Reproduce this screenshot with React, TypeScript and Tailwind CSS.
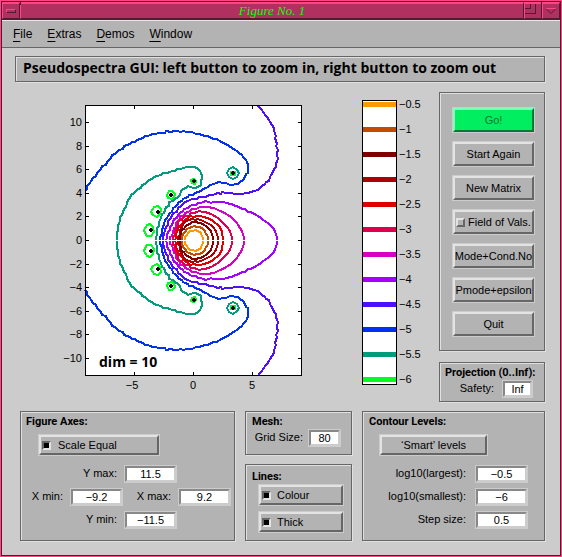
import React, { useId } from "react";

type Point = [number, number];

const AXIS_Y = 240;

const levels = [
  { value: "−0.5", color: "#ff9900" },
  { value: "−1", color: "#c04c00" },
  { value: "−1.5", color: "#800000" },
  { value: "−2", color: "#ad0000" },
  { value: "−2.5", color: "#dc0000" },
  { value: "−3", color: "#de004c" },
  { value: "−3.5", color: "#d800c4" },
  { value: "−4", color: "#a400ff" },
  { value: "−4.5", color: "#4c10ff" },
  { value: "−5", color: "#0030f0" },
  { value: "−5.5", color: "#009c7c" },
  { value: "−6", color: "#00ff20" },
];

// Upper halves of the level curves; the lower halves are their reflections.
const contours: { color: string; points: Point[] }[] = [
  {
    color: "#009c7c",
    points: [
      [117, 240], [117, 236], [119, 223], [123, 212], [130, 198], [138, 189], [147, 182], [157, 176],
      [167, 173], [180, 169], [190, 167], [197, 168], [201, 173], [202, 181], [198, 187], [193, 188],
      [189, 187], [183, 189], [178, 197], [170, 203], [165, 210], [160, 220], [157, 231], [156, 240],
    ],
  },
  {
    color: "#0030f0",
    points: [
      [85, 191], [90, 183], [97, 173], [105, 164], [115, 154], [127, 145], [140, 139], [153, 134],
      [167, 132], [177, 131], [190, 132], [205, 136], [220, 141], [232, 148], [242, 155], [247, 162],
      [248, 170], [245, 177], [240, 182], [233, 185], [223, 183], [216, 183], [208, 187], [198, 192],
      [190, 196], [183, 199], [175, 207], [167, 218], [162, 230], [160, 240],
    ],
  },
  {
    color: "#4c10ff",
    points: [
      [258, 106], [265, 115], [272, 125], [275, 135], [277, 147], [277, 161], [273, 172], [268, 180],
      [260, 188], [248, 193], [237, 194], [223, 193], [215, 194], [203, 197], [190, 200], [183, 204],
      [176, 211], [170, 219], [165, 230], [163, 240],
    ],
  },
  {
    color: "#a400ff",
    points: [
      [277, 240], [276, 233], [270, 225], [258, 216], [243, 209], [230, 204], [220, 202], [210, 202],
      [203, 202], [190, 206], [180, 213], [173, 222], [168, 232], [166, 240],
    ],
  },
  {
    color: "#d800c4",
    points: [
      [244, 240], [243, 233], [238, 225], [231, 217], [220, 211], [207, 207], [198, 208], [190, 211],
      [181, 217], [175, 226], [170, 240],
    ],
  },
  {
    color: "#de004c",
    points: [
      [232, 240], [231, 233], [227, 227], [218, 218], [208, 213], [197, 212], [188, 215], [179, 222],
      [175, 231], [173, 240],
    ],
  },
  {
    color: "#dc0000",
    points: [
      [223, 240], [222, 232], [217, 224], [207, 218], [197, 216], [188, 218], [181, 224], [177, 232], [175, 240],
    ],
  },
  {
    color: "#ad0000",
    points: [[218, 240], [217, 233], [211, 225], [203, 221], [195, 219], [187, 221], [181, 228], [178, 240]],
  },
  {
    color: "#800000",
    points: [[213, 240], [212, 233], [206, 226], [196, 222], [187, 225], [182, 231], [180, 240]],
  },
  {
    color: "#c04c00",
    points: [[208, 240], [206, 233], [202, 228], [194, 226], [187, 229], [183, 234], [182, 240]],
  },
  {
    color: "#ff9900",
    points: [[203, 240], [202, 235], [198, 231], [190, 231], [187, 235], [185, 240]],
  },
];

const eigenvalues: Point[] = [[194, 181], [171, 195], [158, 212], [151, 230], [233, 173]];

const rings: { color: string; points: Point[] }[] = [
  { color: "#00ff20", points: [[167, 195], [169, 191], [172, 191], [175, 194], [174, 197], [172, 199], [168, 198]] },
  { color: "#00ff20", points: [[151, 212], [154, 207], [158, 206], [161, 209], [160, 214], [157, 217], [153, 215]] },
  { color: "#00ff20", points: [[144, 230], [147, 225], [150, 224], [153, 227], [154, 232], [151, 236], [147, 236], [145, 233]] },
  { color: "#00ff20", points: [[191, 180], [194, 179], [196, 181], [195, 184], [192, 183]] },
  { color: "#009c7c", points: [[227, 173], [229, 169], [233, 167], [237, 170], [239, 173], [237, 177], [233, 179], [229, 177]] },
];

// Samples a curve through the points and snaps it to the drawing grid, with
// the slight ripple that a coarse computing mesh leaves in the level lines.
function trace(points: Point[]): string {
  const out: string[] = [];
  let n = 0;
  for (let i = 0; i < points.length - 1; i++) {
    const a = points[Math.max(i - 1, 0)];
    const b = points[i];
    const c = points[i + 1];
    const d = points[Math.min(i + 2, points.length - 1)];
    const steps = Math.max(1, Math.round(Math.hypot(c[0] - b[0], c[1] - b[1]) / 3));
    for (let s = 0; s < steps; s++) {
      const t = s / steps;
      const ripple = n === 0 ? 0 : Math.sin(n * 2.4) * 0.55;
      const at = (k: 0 | 1) =>
        Math.round(
          ripple +
            0.5 *
              (2 * b[k] +
                (c[k] - a[k]) * t +
                (2 * a[k] - 5 * b[k] + 4 * c[k] - d[k]) * t * t +
                (3 * b[k] - a[k] - 3 * c[k] + d[k]) * t * t * t),
        );
      out.push(`${at(0)},${at(1)}`);
      n++;
    }
  }
  out.push(points[points.length - 1].join(","));
  return out.join(" ");
}

function HalfPlane() {
  return (
    <g>
      {contours.map((c) => (
        <polyline key={c.color} points={trace(c.points)} fill="none" stroke={c.color} strokeWidth={2} />
      ))}
      {rings.map((r, i) => (
        <polygon key={i} points={r.points.map((p) => p.join(",")).join(" ")} fill="none" stroke={r.color} strokeWidth={2} />
      ))}
      <rect x={230} y={171} width={6} height={5} fill="#00ff20" />
      {eigenvalues.map(([x, y]) => (
        <path key={x} d={`M${x - 2} ${y - 1}h1v-1h2v1h1v2h-1v1h-2v-1h-1z`} fill="#000" />
      ))}
    </g>
  );
}

function Plot() {
  const xTicks = [-5, 0, 5];
  const yTicks = [10, 8, 6, 4, 2, 0, -2, -4, -6, -8, -10];
  const name = (n: number) => (n < 0 ? `−${-n}` : `${n}`);
  return (
    <svg className="h-[300px] w-[255px] shrink-0" viewBox="55 92 255 300" role="img" aria-label="Pseudospectra contours">
      <g shapeRendering="crispEdges">
        <rect x={85} y={105} width={217} height={271} fill="#fff" />
        <HalfPlane />
        <g transform={`translate(0 ${2 * AXIS_Y + 1}) scale(1 -1)`}>
          <HalfPlane />
        </g>
        <rect x={85.5} y={105.5} width={216} height={270} fill="none" stroke="#000" />
        {xTicks.map((t) => {
          const x = Math.round(193 + t * 11.8) + 0.5;
          return <path key={t} d={`M${x} 106v3M${x} 375v-3`} stroke="#000" />;
        })}
        {yTicks.map((t) => {
          const y = Math.round(240 - t * 11.8) + 0.5;
          return <path key={t} d={`M86 ${y}h3M301 ${y}h-3`} stroke="#000" />;
        })}
      </g>
      <g className="font-['Liberation_Sans',Arial,sans-serif] text-[11px]">
        {xTicks.map((t) => (
          <text key={t} x={t < 0 ? 132 : Math.round(193 + t * 11.8)} y={389} textAnchor="middle">
            {name(t)}
          </text>
        ))}
        {yTicks.map((t) => (
          <text key={t} x={82} y={Math.round(240 - t * 11.8) + 4} textAnchor="end">
            {name(t)}
          </text>
        ))}
      </g>
      <text x={99} y={367} className="font-['Open_Sans',sans-serif] text-[14px] font-bold">
        dim = 10
      </text>
    </svg>
  );
}

function ColorBar() {
  return (
    <svg className="h-[300px] w-[75px] shrink-0" viewBox="358 92 75 300" role="img" aria-label="Contour level colours">
      <rect x={362.5} y={100.5} width={34} height={284} fill="#fff" stroke="#000" shapeRendering="crispEdges" />
      {levels.map((l, i) => (
        <g key={l.value}>
          <rect x={363} y={102 + i * 25} width={33} height={5} fill={l.color} shapeRendering="crispEdges" />
          <text x={399} y={108 + i * 25} className="font-['Liberation_Sans',Arial,sans-serif] text-[11px]">
            {l.value}
          </text>
        </g>
      ))}
    </svg>
  );
}

function Panel({ className = "", children }: { className?: string; children: React.ReactNode }) {
  return (
    <section
      className={`border border-[#666] bg-[#b3b3b3] shadow-[inset_1px_1px_0_#e0e0e0,1px_1px_0_#e0e0e0] ${className}`}
    >
      {children}
    </section>
  );
}

function Heading({ children }: { children: React.ReactNode }) {
  return <h2 className="font-[Roboto,sans-serif] text-[11px] leading-[14px] font-bold">{children}</h2>;
}

const shell = "block border border-[#ccc]";
const bevel =
  "flex h-full w-full items-center border-2 border-t-[#e3e3e3] border-l-[#e3e3e3] border-r-[#666] border-b-[#666]";

function Push({ className = "", children }: { className?: string; children: React.ReactNode }) {
  return (
    <button type="button" className={`${shell} ${className}`}>
      <span className={`${bevel} justify-center whitespace-nowrap`}>{children}</span>
    </button>
  );
}

function Toggle({ className = "", inner = "", checked = false, children }: { className?: string; inner?: string; checked?: boolean; children: React.ReactNode }) {
  return (
    <label className={`${shell} ${className}`}>
      <span className={`${bevel} whitespace-nowrap ${inner}`}>
        <input
          type="checkbox"
          defaultChecked={checked}
          className="h-[9px] w-[9px] shrink-0 appearance-none border-2 border-t-[#e3e3e3] border-r-[#666] border-b-[#666] border-l-[#e3e3e3] checked:border-t-[#666] checked:border-r-[#e3e3e3] checked:border-b-[#e3e3e3] checked:border-l-[#666] checked:bg-black"
        />
        {children}
      </span>
    </label>
  );
}

function Field({ label, value, labelClass = "", inputClass = "w-[53px]", gap = "gap-[7px]" }: { label: string; value: string; labelClass?: string; inputClass?: string; gap?: string }) {
  const id = useId();
  return (
    <div className={`flex items-start ${gap}`}>
      <label htmlFor={id} className={`text-right leading-4 whitespace-nowrap ${labelClass}`}>
        {label}
      </label>
      <span className={`h-[18px] shrink-0 border border-[#ccc] ${inputClass}`}>
        <input
          id={id}
          defaultValue={value}
          className="block h-full w-full border-2 border-t-[#888] border-r-[#ccc] border-b-[#ccc] border-l-[#888] bg-white text-center leading-3 outline-none"
        />
      </span>
    </div>
  );
}

function TitleBar() {
  const key = "border-t-2 border-l border-r border-b border-t-[#ff4684] border-l-[#ff4684] border-r-[#5a1830] border-b-[#5a1830] bg-[#b03060]";
  return (
    <header className="flex h-[18px] border-b border-[#5a1830] bg-[#5a1830]">
      <button type="button" aria-label="Window menu" className={`flex w-[18px] items-center justify-center ${key}`}>
        <span className="h-1 w-[10px] border border-t-[#ff4684] border-r-[#5a1830] border-b-[#5a1830] border-l-[#ff4684]" />
      </button>
      <h1 className={`flex-1 text-center font-['Liberation_Serif',serif] text-[13px] leading-[14px] text-[#00ff00] italic ${key}`}>
        Figure No. 1
      </h1>
      <button type="button" aria-label="Maximize" className={`w-[18px] ${key}`}>
        <svg viewBox="0 0 16 14" className="block h-[14px] w-4" fill="none" shapeRendering="crispEdges">
          <path d="M0 9.5h10.5V0M0 4.5h5.5V0" stroke="#5a1830" />
        </svg>
      </button>
      <button type="button" aria-label="Minimize" className={`w-[18px] ${key}`}>
        <svg viewBox="0 0 16 14" className="block h-[14px] w-4" fill="none">
          <path d="M13 4.5L8 9.5L3 4.5" stroke="#5a1830" />
          <path d="M3 4.5h10" stroke="#ff4684" shapeRendering="crispEdges" />
        </svg>
      </button>
    </header>
  );
}

function Notches() {
  const mark = "absolute bg-[#5a1830]";
  return (
    <div aria-hidden="true">
      <i className={`${mark} top-0 left-[19px] h-1 w-px`} />
      <i className={`${mark} top-0 right-[19px] h-1 w-px`} />
      <i className={`${mark} bottom-0 left-[19px] h-px w-px`} />
      <i className={`${mark} right-[19px] bottom-0 h-px w-px`} />
      <i className={`${mark} top-[19px] left-0 h-px w-px`} />
      <i className={`${mark} top-[19px] right-0 h-px w-px`} />
      <i className={`${mark} bottom-5 left-0 h-px w-px`} />
      <i className={`${mark} right-0 bottom-5 h-px w-px`} />
    </div>
  );
}

export default function App() {
  return (
    <div className="relative min-h-screen border border-[#ff4684] bg-[#ccc] font-['Liberation_Sans',Arial,sans-serif] text-[11px] text-black">
      <Notches />
      <div className="min-h-[555px] border border-[#5a1830]">
        <TitleBar />
        <nav className="flex h-7 gap-[15px] border-t border-b border-t-[#e8e8e8] border-b-[#666] bg-[#b3b3b3] pl-[11px] text-[12px]">
          {["File", "Extras", "Demos", "Window"].map((m) => (
            <button key={m} type="button" className="leading-[26px]">
              <span className="underline underline-offset-3">{m[0]}</span>
              {m.slice(1)}
            </button>
          ))}
        </nav>

        <main>
          <Panel className="mt-2 mr-[15px] ml-[13px] h-[26px] pl-[7px]">
            <p className="font-['Open_Sans',sans-serif] text-[14px] leading-[22px] font-bold whitespace-nowrap">
              Pseudospectra GUI: left button to zoom in, right button to zoom out
            </p>
          </Panel>

          <div className="mt-[10px] mr-[15px] flex">
            <div className="flex flex-1 justify-between pr-[6px] pl-[53px]">
              <Plot />
              <ColorBar />
            </div>
            <div className="flex w-[106px] shrink-0 flex-col gap-[11px]">
              <Panel className="flex h-[259px] flex-col gap-2 pt-[14px] pr-[9px] pl-3">
                <button type="button" disabled className="block h-[26px] w-full border border-[#ccc]">
                  <span className="flex h-full w-full items-center justify-center border-2 border-t-[#80ffb8] border-r-[#00783c] border-b-[#00783c] border-l-[#80ffb8] bg-[#00ee60] text-black/55">
                    Go!
                  </span>
                </button>
                <Push className="h-[26px] w-full">Start Again</Push>
                <Push className="h-[26px] w-full">New Matrix</Push>
                <Toggle className="h-[26px] w-full" inner="gap-[3px] pl-px">
                  Field of Vals.
                </Toggle>
                <Push className="h-[26px] w-full">Mode+Cond.No</Push>
                <Push className="h-[26px] w-full">Pmode+epsilon</Push>
                <Push className="h-[26px] w-full">Quit</Push>
              </Panel>
              <Panel className="h-10 pt-[3px] pl-[5px]">
                <Heading>Projection (0..Inf):</Heading>
                <Field label="Safety:" value="Inf" labelClass="w-[49px]" inputClass="w-[31px]" gap="gap-2" />
              </Panel>
            </div>
          </div>

          <div className="mt-[9px] mr-[15px] mb-[14px] ml-[18px] grid grid-cols-[215fr_107fr_183fr] gap-[10px]">
            <Panel className="h-[130px] pt-[3px]">
              <div className="pl-[5px]">
                <Heading>Figure Axes:</Heading>
              </div>
              <Toggle checked className="mt-[5px] ml-[17px] h-[22px] w-[122px]" inner="gap-[7px] pl-px">
                Scale Equal
              </Toggle>
              <div className="mt-[9px] flex flex-col gap-[5px]">
                <Field label="Y max:" value="11.5" labelClass="w-[96px]" />
                <div className="flex">
                  <Field label="X min:" value="−9.2" labelClass="w-[42px]" />
                  <Field label="X max:" value="9.2" labelClass="w-[48px]" />
                </div>
                <Field label="Y min:" value="−11.5" labelClass="w-[96px]" />
              </div>
            </Panel>

            <div className="flex flex-col gap-[9px]">
              <Panel className="h-11 pt-[3px] pl-[6px]">
                <Heading>Mesh:</Heading>
                <Field label="Grid Size:" value="80" labelClass="w-[51px]" inputClass="w-[33px]" gap="gap-[5px]" />
              </Panel>
              <Panel className="h-[77px] pt-[5px] pl-[6px]">
                <Heading>Lines:</Heading>
                <div className="flex flex-col gap-[5px] pl-[6px]">
                  <Toggle checked className="h-[22px] w-[86px]" inner="gap-[6px] pl-px">
                    Colour
                  </Toggle>
                  <Toggle checked className="h-[22px] w-[86px]" inner="gap-[6px] pl-px">
                    Thick
                  </Toggle>
                </div>
              </Panel>
            </div>

            <Panel className="h-[130px] pt-[3px]">
              <div className="pl-[6px]">
                <Heading>Contour Levels:</Heading>
              </div>
              <Push className="mt-[5px] ml-4 h-[22px] w-[109px]">‘Smart’ levels</Push>
              <div className="mt-[9px] flex flex-col gap-[5px]">
                <Field label="log10(largest):" value="−0.5" labelClass="w-[103px]" gap="gap-[9px]" />
                <Field label="log10(smallest):" value="−6" labelClass="w-[103px]" gap="gap-[9px]" />
                <Field label="Step size:" value="0.5" labelClass="w-[103px]" gap="gap-[9px]" />
              </div>
            </Panel>
          </div>
        </main>
      </div>
    </div>
  );
}
